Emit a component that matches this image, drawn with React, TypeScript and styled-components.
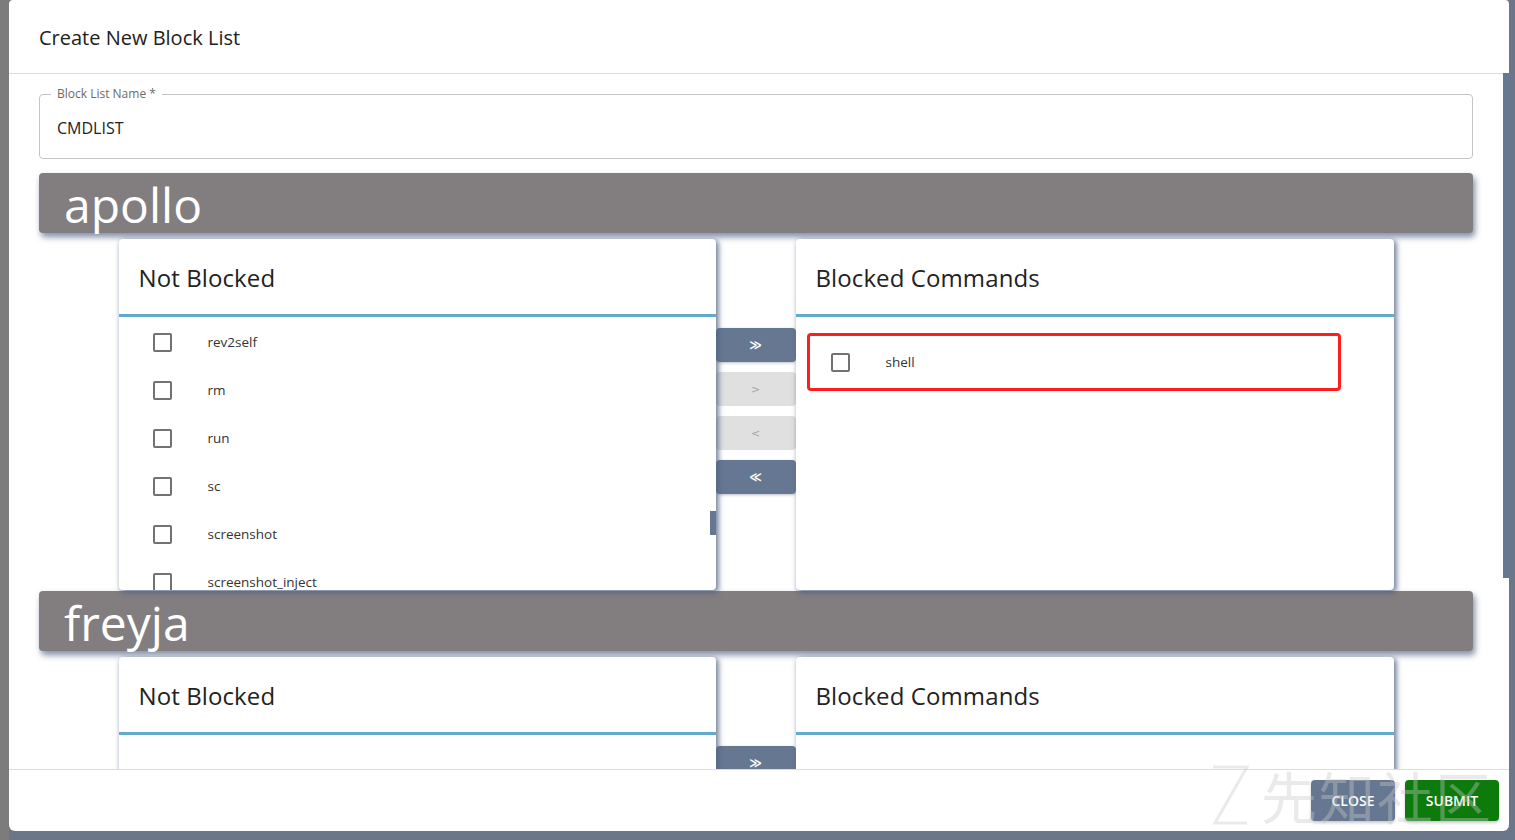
import React, { useLayoutEffect, useRef, useState } from "react";
import styled, { createGlobalStyle } from "styled-components";

const GlobalStyle = createGlobalStyle`
  html, body {
    margin: 0;
    padding: 0;
  }
  body {
    width: 1515px;
    height: 840px;
    overflow: hidden;
    background: linear-gradient(to right, #7c7c7c 0, #7c7c7c 9px, #6b768a 9px);
    font-family: "Open Sans", "Noto Sans", sans-serif;
  }
`;

const Backdrop = styled.div`
  height: 840px;
  padding-left: 9px;
  box-sizing: border-box;
`;

const Dialog = styled.div`
  position: relative;
  width: 1500px;
  height: 831px;
  background: #fff;
  border-radius: 4px 4px 6px 6px;
  display: flex;
  flex-direction: column;
  overflow: hidden;
`;

const Header = styled.div`
  flex-shrink: 0;
  height: 73px;
  border-bottom: 1px solid #dcdcdc;
  display: flex;
  align-items: center;
  padding: 0 30px;
  font-size: 20px;
  line-height: 26px;
  color: #212121;
`;

const Title = styled.span`
  padding-top: 2px;
`;

const Body = styled.div`
  flex: 1;
  overflow: hidden;
  padding: 12px 36px 22px 30px;
`;

// drawn scroll thumb, sits over the right edge of a scrolled area
const Thumb = styled.div<{ $top: number; $h: number }>`
  position: absolute;
  right: 0;
  top: ${(p) => p.$top}px;
  width: 6px;
  height: ${(p) => p.$h}px;
  background: #667891;
`;

const Field = styled.fieldset`
  margin: 0;
  padding: 0 11px;
  min-width: 0;
  border: 1px solid #c4c4c4;
  border-radius: 4px;
`;

const Legend = styled.legend`
  padding: 0 6px;
  font-size: 12px;
  line-height: 16px;
  color: #6b6b6b;
`;

const FieldValue = styled.div`
  padding: 14px 6px 18px;
  font-size: 16px;
  line-height: 24px;
  color: #222;
`;

const HostBar = styled.div<{ $gap: number }>`
  height: 60px;
  margin-top: ${(p) => p.$gap}px;
  padding-left: 25px;
  background: #827e7f;
  border-radius: 4px;
  box-shadow: 2px 4px 6px rgba(84, 104, 138, 0.75);
  color: #fff;
  font-size: 48px;
  line-height: 64px;
`;

const TransferRow = styled.div`
  display: flex;
  justify-content: center;
  margin-top: 6px;
`;

const Card = styled.div<{ $w: number }>`
  position: relative;
  width: ${(p) => p.$w}px;
  height: 351px;
  background: #fff;
  border-radius: 4px;
  box-shadow: 2px 2px 5px 1px rgba(80, 98, 130, 0.75);
  display: flex;
  flex-direction: column;
  overflow: hidden;
`;

const CardHeader = styled.div`
  flex-shrink: 0;
  height: 73px;
  padding: 2px 0 0 20px;
  border-bottom: 3px solid #65a9cd;
  display: flex;
  align-items: center;
  font-size: 24px;
  letter-spacing: 0.1px;
  color: #222;
`;

const List = styled.div`
  flex: 1;
  overflow: hidden;
  padding: 8px 0;
`;

const BlockedList = styled.div`
  flex: 1;
  padding-top: 16px;
`;

const Item = styled.div`
  height: 48px;
  display: flex;
  align-items: center;
  padding-left: 34px;
  font-size: 13.5px;
  color: #333;
`;

const MarkedItem = styled.div`
  height: 52px;
  margin: 0 53px 0 11px;
  padding-left: 21px;
  border: 3px solid #ff1e1e;
  border-radius: 4px;
  display: flex;
  align-items: center;
  font-size: 13.5px;
  color: #333;
`;

const Check = styled.span`
  width: 19px;
  height: 19px;
  box-sizing: border-box;
  border: 2px solid #727272;
  border-radius: 2px;
  margin-right: 36px;
  flex-shrink: 0;
`;

const MoveColumn = styled.div`
  width: 80px;
  display: flex;
  flex-direction: column;
  justify-content: center;
  gap: 10px;
  padding-bottom: 7px;
`;

const MoveButton = styled.button<{ $on: boolean }>`
  height: 34px;
  border: none;
  border-radius: 4px;
  padding: 0;
  background: ${(p) => (p.$on ? "#667891" : "#e0e0e0")};
  color: ${(p) => (p.$on ? "#fff" : "#a5a5a5")};
  box-shadow: ${(p) => (p.$on ? "0 1px 3px rgba(60,70,90,0.35)" : "none")};
  font-family: "DejaVu Sans", sans-serif;
  font-size: ${(p) => (p.$on ? 12 : 11)}px;
  font-weight: ${(p) => (p.$on ? 700 : 400)};
`;

const Footer = styled.div`
  flex-shrink: 0;
  height: 61px;
  border-top: 1px solid #dcdcdc;
  display: flex;
  justify-content: flex-end;
  align-items: center;
  gap: 10px;
  padding-right: 10px;
`;

const ActionButton = styled.button<{ $bg: string; $w: number }>`
  width: ${(p) => p.$w}px;
  height: 41px;
  border: none;
  border-radius: 4px;
  background: ${(p) => p.$bg};
  color: #fff;
  font-family: "Open Sans", sans-serif;
  font-size: 14px;
  font-weight: 600;
  box-shadow: 0 2px 3px rgba(0, 0, 0, 0.2);
`;

const Watermark = styled.div`
  position: absolute;
  left: 1198px;
  top: 760px;
  display: flex;
  align-items: center;
  gap: 10px;
  pointer-events: none;
  color: rgba(200, 200, 200, 0.38);
  font-family: "Noto Sans CJK SC", sans-serif;
  font-size: 56px;
  line-height: 70px;
  letter-spacing: 2px;
`;

const apolloBefore = [
  "assembly_inject", "blockdlls", "cat", "cd", "cp", "dcsync", "download",
  "execute_assembly", "execute_coff", "execute_pe", "exit",
  "get_injection_techniques", "getprivs", "ifconfig", "inject",
  "inline_assembly", "jobkill", "jobs", "keylog_inject", "kill", "link",
  "load", "ls", "make_token", "mimikatz", "mkdir", "mv", "net_dclist",
  "net_localgroup", "net_localgroup_member", "net_shares", "netstat",
  "powerpick", "powershell", "powershell_import", "ppid", "printspoofer",
  "ps", "psinject", "pth", "pwd", "reg_query", "reg_write_value",
  "register_assembly", "register_coff", "register_file",
];

const apolloRest = [
  "rev2self", "rm", "run", "sc", "screenshot", "screenshot_inject",
  "set_injection_technique", "shinject", "sleep", "socks", "spawn",
  "spawnto_x64", "spawnto_x86", "steal_token", "unlink", "upload",
  "whoami", "wmiexecute",
];

const LIST_TOP = 76; // header + rule, inside the card

function NotBlocked({ items, startAt }: { items: string[]; startAt: number }) {
  const ref = useRef<HTMLDivElement>(null);
  const [thumb, setThumb] = useState<{ top: number; h: number } | null>(null);

  useLayoutEffect(() => {
    const el = ref.current;
    if (!el) return;
    el.scrollTop = startAt * 48 + 7;
    const view = el.clientHeight;
    const full = el.scrollHeight;
    if (full > view) {
      const h = Math.max(20, (view * view) / full);
      const top = (el.scrollTop / (full - view)) * (view - h);
      setThumb({ top, h });
    }
  }, [startAt, items.length]);

  return (
    <Card $w={597}>
      <CardHeader>Not Blocked</CardHeader>
      <List ref={ref}>
        {items.map((cmd) => (
          <Item key={cmd}>
            <Check />
            {cmd}
          </Item>
        ))}
      </List>
      {thumb && <Thumb $top={LIST_TOP + thumb.top} $h={thumb.h} />}
    </Card>
  );
}

function Blocked({ items }: { items: string[] }) {
  return (
    <Card $w={598}>
      <CardHeader>Blocked Commands</CardHeader>
      <BlockedList>
        {items.map((cmd) => (
          <MarkedItem key={cmd}>
            <Check />
            {cmd}
          </MarkedItem>
        ))}
      </BlockedList>
    </Card>
  );
}

function Mover() {
  return (
    <MoveColumn>
      <MoveButton $on>≫</MoveButton>
      <MoveButton $on={false}>&gt;</MoveButton>
      <MoveButton $on={false}>&lt;</MoveButton>
      <MoveButton $on>≪</MoveButton>
    </MoveColumn>
  );
}

const hosts = [
  { name: "apollo", allowed: [...apolloBefore, ...apolloRest], blocked: ["shell"], startAt: apolloBefore.length, gap: 14 },
  { name: "freyja", allowed: [], blocked: [], startAt: 0, gap: 1 },
];

export default function App() {
  return (
    <>
      <GlobalStyle />
      <Backdrop>
        <Dialog>
          <Header>
            <Title>Create New Block List</Title>
          </Header>
          <Body>
            <Field>
              <Legend>Block List Name *</Legend>
              <FieldValue>CMDLIST</FieldValue>
            </Field>
            {hosts.map((h) => (
              <React.Fragment key={h.name}>
                <HostBar $gap={h.gap}>{h.name}</HostBar>
                <TransferRow>
                  <NotBlocked items={h.allowed} startAt={h.startAt} />
                  <Mover />
                  <Blocked items={h.blocked} />
                </TransferRow>
              </React.Fragment>
            ))}
          </Body>
          <Thumb $top={73} $h={505} />
          <Footer>
            <ActionButton $bg="#667891" $w={84}>CLOSE</ActionButton>
            <ActionButton $bg="#0c7b0c" $w={94}>SUBMIT</ActionButton>
          </Footer>
          <Watermark>
            <svg width="44" height="64" viewBox="0 0 44 64" fill="none" stroke="currentColor" strokeWidth="3">
              <path d="M6 4 H40 L8 60 H40" />
            </svg>
            <span>先知社区</span>
          </Watermark>
        </Dialog>
      </Backdrop>
    </>
  );
}
